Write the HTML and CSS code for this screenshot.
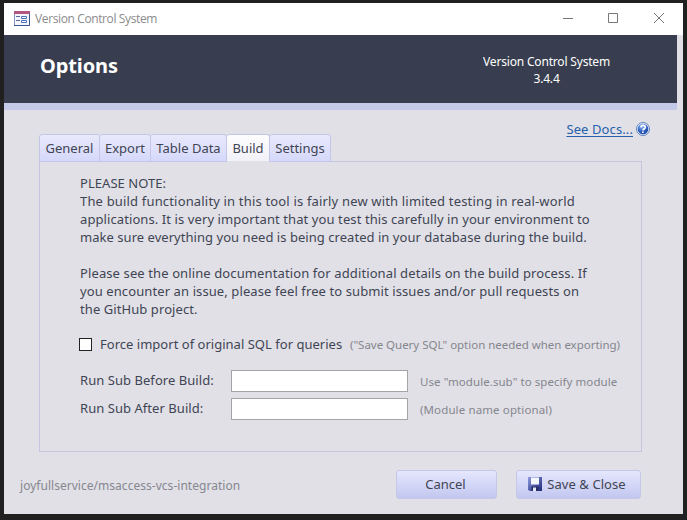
FILE: index.html
```html
<!DOCTYPE html>
<html lang="en">
<head>
<meta charset="utf-8">
<title>Version Control System</title>
<link rel="stylesheet" href="styles.css">
</head>
<body>
<div class="window">
  <div class="titlebar">
    <svg class="form-icon" width="16" height="15" viewBox="0 0 16 15">
      <rect x=".5" y=".5" width="15" height="14" fill="#f4f6fb" stroke="#8795bd"/>
      <path d="M0 0h16v3H0z" fill="#b2587e"/>
      <path d="M15.500 3v11.500H0" fill="none" stroke="#3e5795"/>
      <path d="M2 5.500h4M2 9.500h4" stroke="#5a6a98"/>
      <path d="M7.500 5.500h5v2h-5zM7.500 9.500h5v2h-5z" fill="#fff" stroke="#4a70ba"/>
    </svg>
    <span class="caption">Version Control System</span>
    <svg class="controls" width="104" height="12" viewBox="0 0 104 12">
      <path d="M2 6.500h10M47.500 1.500h9v9h-9zM93 1l10 10M103 1l-10 10" fill="none" stroke="#777"/>
    </svg>
  </div>
  <header class="header">
    <h1>Options</h1>
    <div class="version"><span>Version Control System</span><br>3.4.4</div>
  </header>
  <div class="stripe"></div>
  <main class="content">
    <div class="docs">
      <a class="docs-link">See Docs...</a>
      <svg width="14" height="14" viewBox="0 0 14 14">
        <defs><radialGradient id="ball" cx=".4" cy=".25" r=".8"><stop offset="0" stop-color="#8fb8f4"/><stop offset=".6" stop-color="#2f62c4"/><stop offset="1" stop-color="#1c3f98"/></radialGradient></defs>
        <circle cx="7" cy="7" r="6.500" fill="#e9f0fb" stroke="#5f82ba"/>
        <circle cx="7" cy="7" r="5.300" fill="url(#ball)"/>
        <path d="M4.900 5.300C5.200 2.800 9.600 2.900 9.300 5.300 9.100 6.800 7.200 6.700 7 8.400M6.900 9.400v1.600" fill="none" stroke="#fff" stroke-width="1.700"/>
      </svg>
    </div>
    <nav class="tabs">
      <div class="tab general"><span>General</span></div>
      <div class="tab export"><span>Export</span></div>
      <div class="tab table"><span>Table Data</span></div>
      <div class="tab build active"><span>Build</span></div>
      <div class="tab settings"><span>Settings</span></div>
    </nav>
    <section class="panel">
      <p class="note">
        <span class="l1">PLEASE NOTE:</span>
        <span class="l2">The build functionality in this tool is fairly new with limited testing in real-world</span>
        <span class="l3">applications. It is very important that you test this carefully in your environment to</span>
        <span class="l4">make sure everything you need is being created in your database during the build.</span>
      </p>
      <p class="note">
        <span class="l5">Please see the online documentation for additional details on the build process. If</span>
        <span class="l6">you encounter an issue, please feel free to submit issues and/or pull requests on</span>
        <span class="l7">the GitHub project.</span>
      </p>
      <div class="check-row">
        <span class="checkbox"></span>
        <span class="check-label">Force import of original SQL for queries</span>
        <span class="hint h1">("Save Query SQL" option needed when exporting)</span>
      </div>
      <div class="field-row">
        <label>Run Sub Before Build:</label>
        <input type="text">
        <span class="hint h2">Use "module.sub" to specify module</span>
      </div>
      <div class="field-row">
        <label>Run Sub After Build:</label>
        <input type="text">
        <span class="hint h3">(Module name optional)</span>
      </div>
    </section>
    <footer class="footer">
      <span class="repo">joyfullservice/msaccess-vcs-integration</span>
      <button class="cancel"><span>Cancel</span></button>
      <button class="save">
        <svg width="14" height="14" viewBox="0 0 14 14">
          <defs><linearGradient id="disk" x2="1" y2="1"><stop offset="0" stop-color="#8d9ade"/><stop offset="1" stop-color="#1f2878"/></linearGradient></defs>
          <path d="M0 0h14v14H1.500L0 12.500z" fill="url(#disk)"/>
          <path d="M3 .5h8v7H3z" fill="#f4f6fd"/>
          <path d="M3.500 9.500h7V14h-7z" fill="#252c68"/>
          <path d="M5 10.500h3V14H5z" fill="#e5e8f6"/>
        </svg>
        <span>Save &amp; Close</span>
      </button>
    </footer>
  </main>
</div>
</body>
</html>
```
FILE: styles.css
```css
* { box-sizing: border-box; }
body {
  margin: 0;
  height: 520px;
  padding: 3px 4px 6px;
  overflow: hidden;
  background: #202020;
  color: #3f4553;
  font: 13px/18px "Noto Sans", sans-serif;
}
.window { height: 511px; width: 679px; background: #e1e0e7; }
.titlebar { display: flex; align-items: center; height: 32px; padding: 0 18px 2px 10px; background: #fff; color: #8b8b8b; }
.caption { margin: 2px 0 0 5px; white-space: nowrap; font: 12px/18px "Open Sans", sans-serif; letter-spacing: -0.38px; }
.controls { margin-left: auto; }
.header { display: flex; justify-content: space-between; width: 673px; height: 68px; padding: 18px 67px 0 36px; background: #383e4f; color: #fff; }
h1 { margin: 0; font: 700 20px/25px "Noto Sans", sans-serif; letter-spacing: -0.1px; }
.version { font-size: 12px; line-height: 17px; text-align: center; white-space: nowrap; letter-spacing: -0.18px; }
.stripe { width: 673px; height: 7px; background: #c5c9e9; }
.docs { display: flex; align-items: center; justify-content: flex-end; gap: 3px; height: 24px; padding: 13px 33px 0 0; }
.docs-link { color: #2560ad; text-decoration: underline; text-underline-offset: 2px; white-space: nowrap; letter-spacing: 0.1px; }
.tabs { display: flex; align-items: stretch; height: 28px; margin-left: 35px; position: relative; }
.tab { display: flex; align-items: center; justify-content: center; border: 1px solid #c3c6e6; border-left-width: 0; border-radius: 3px 3px 0 0; background: linear-gradient(#e9e9fc, #d5d8fa); white-space: nowrap; }
.tab.general { width: 61px; border-left-width: 1px; }
.tab.export { width: 51px; }
.tab.table { width: 76px; }
.tab.build { width: 43px; }
.tab.settings { width: 61px; }
.tab.active { background: linear-gradient(#fdfdfe, #f1f1f8); border-bottom-color: #e1e0e7; }
.panel { width: 603px; height: 291px; margin: -1px 0 0 35px; padding: 12px 20px 0 40px; border: 1px solid #c5c6dd; }
.note { margin: 0 0 18px; }
.note span { display: block; width: max-content; white-space: nowrap; }
.l1 { letter-spacing: 0.05px; }
.l2 { letter-spacing: 0.17px; }
.l3 { letter-spacing: 0.09px; }
.l4 { letter-spacing: 0.04px; }
.l5 { letter-spacing: 0.11px; }
.l6 { letter-spacing: 0.1px; }
.l7 { letter-spacing: 0.08px; }
.check-row { display: flex; align-items: center; height: 18px; margin-top: -1px; }
.checkbox { width: 13px; height: 13px; background: #fff; border: 1px solid #222; margin-left: -1px; }
.check-label { width: 250px; margin: -1px 0 0 8px; white-space: nowrap; letter-spacing: 0.02px; }
.hint { margin-top: 2px; color: #85868d; font-size: 11.500px; white-space: nowrap; }
.h1 { letter-spacing: -0.02px; }
.h2 { letter-spacing: 0.06px; }
.h3 { letter-spacing: 0.12px; }
.field-row { display: flex; align-items: center; height: 22px; margin-top: 6px; }
.check-row + .field-row { margin-top: 17px; }
.field-row label { width: 151px; white-space: nowrap; margin-top: -3px; letter-spacing: 0.05px; }
.field-row input { width: 177px; height: 22px; border: 1px solid #a4a4a8; background: #fff; padding: 0 4px; margin: 0 12px 0 0; }
.footer { display: flex; height: 29px; margin: 18px 42px 0 16px; }
.repo { margin-top: 7px; color: #868790; font-size: 12px; letter-spacing: 0.03px; }
button { display: flex; align-items: center; justify-content: center; height: 29px; padding: 0; border: 1px solid #c4c7e7; border-radius: 3px; background: linear-gradient(#e5e7fd, #c2c7f0); color: inherit; font: inherit; white-space: nowrap; }
.cancel { width: 101px; margin-left: auto; padding: 0 2px 2px 0; }
.save { width: 125px; margin-left: 19px; padding: 0 3px 2px 0; gap: 5px; letter-spacing: 0.08px; }
```
